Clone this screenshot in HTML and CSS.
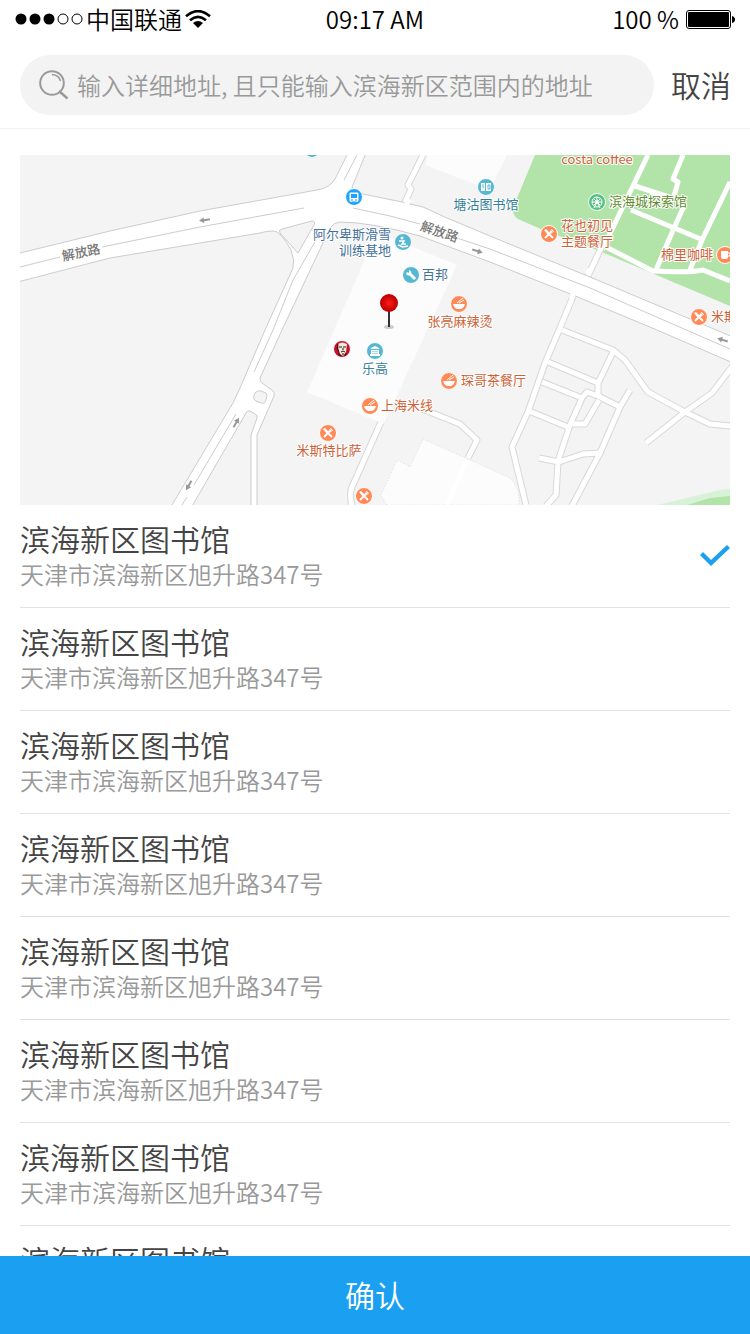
FILE: index.html
```
<!DOCTYPE html>
<html lang="zh-CN">
<head>
  <meta charset="UTF-8">
  <meta name="viewport" content="width=device-width, initial-scale=1.0">
  <title>选择地址</title>
  <link rel="stylesheet" href="styles.css">
</head>
<body>
  <div class="status-bar">
    <div class="carrier">
      <svg class="signal" width="68" height="12" viewBox="0 0 68 12">
        <circle cx="6" cy="6" r="5.5"/>
        <circle cx="20" cy="6" r="5.5"/>
        <circle cx="34" cy="6" r="5.5"/>
        <circle class="empty" cx="48" cy="6" r="5"/>
        <circle class="empty" cx="62" cy="6" r="5"/>
      </svg>
      <span>中国联通</span>
      <svg class="wifi" width="26" height="18" viewBox="0 0 26 18">
        <path d="M1 6.2Q13-4 25 6.2M5 10.3Q13 3.6 21 10.3" fill="none" stroke="#000" stroke-width="2.6"/>
        <path d="M8 13Q13 9 18 13L13 18Z"/>
      </svg>
    </div>
    <div class="time">09:17 AM</div>
    <div class="battery">
      <span>100 %</span>
      <svg width="49" height="19" viewBox="0 0 49 19">
        <rect x="0.5" y="0.5" width="44" height="18" rx="2.5" fill="none" stroke="#000"/>
        <rect x="2" y="2" width="41" height="15" rx="1"/>
        <path d="M46 6Q49 7 49 9.500T46 13Z"/>
      </svg>
    </div>
  </div>

  <form class="search-bar">
    <label class="search-box">
      <svg width="30" height="30" viewBox="0 0 30 30" fill="none" stroke="#999">
        <circle cx="13" cy="13" r="11.800" stroke-width="2"/>
        <path d="M20 21L28.500 28.500" stroke-width="2.400"/>
        <path d="M13 4.500Q20 5 21.500 11" stroke-width="1.500"/>
      </svg>
      <input type="search" aria-label="搜索地址" placeholder="输入详细地址, 且只能输入滨海新区范围内的地址">
    </label>
    <button type="button" class="cancel">取消</button>
  </form>

  <main>
    <svg class="map" viewBox="20 155 710 350" preserveAspectRatio="xMidYMid slice">
      <defs>
        <radialGradient id="ball">
          <stop offset="0" stop-color="#ff1a1a"/>
          <stop offset="1" stop-color="#b80000"/>
        </radialGradient>
        <symbol id="fork" viewBox="-10 -10 20 20">
          <circle class="ring food" r="8.500"/>
          <path d="M-1-1L4 4M2-2L-4 4" fill="none" stroke="#fff" stroke-width="1.800"/>
          <path d="M-5-4L-3-5L1-1L-1 1Z" fill="#fff"/>
          <path d="M1-2L3-5M2-1L5-3M1-1L4-4" fill="none" stroke="#fff"/>
        </symbol>
        <symbol id="bowl" viewBox="-10 -10 20 20">
          <circle class="ring food" r="8.500"/>
          <path d="M-6 0H6Q5 4 2 5H-2Q-5 4-6 0Z" fill="#fff"/>
          <path d="M-2-1L4-6M0-1L5-4" stroke="#fff"/>
        </symbol>
        <symbol id="arrow" viewBox="-7 -4 14 8">
          <path d="M-6 0L-1-3V-1H5V1H-1V3Z" fill="#999"/>
        </symbol>
        <!-- narrow streets, drawn twice: grey casing, then white fill -->
        <g id="streets" fill="none" stroke-linejoin="round">
          <path d="M423 155L408 185L411 189L403 207"/>
          <path d="M602 246L586 280M574 294L562 323L560 328L545 363L528 412L512 447L526 505"/>
          <path d="M562 330L613 350L625 360L648 392L685 412L710 424L730 426"/>
          <path d="M734 364L712 393L685 412L646 443"/>
          <path d="M548 362L598 383M613 352L598 383V396"/>
          <path d="M542 382L582 398L587 392L598 396L620 407M529 411L568 427"/>
          <path d="M582 398L570 425L560 455L558 462L556 495L546 506"/>
          <path d="M570 424H585L599 400M630 390L620 407L600 453L572 506"/>
          <path d="M539 458L559 462L583 454L601 453"/>
          <path d="M417 407L460 424L477 440L468 458M385 413L352 487Q349 494 352 506"/>
        </g>
      </defs>

      <rect x="20" y="155" width="710" height="350" fill="#f4f4f4"/>
      <path class="building" d="M428 155L425 165L477 185L493 183L507 155Z"/>

      <!-- parks -->
      <path fill="#b2e3a8" d="M535 155L515 203Q510 214 518 219L543 230L597 250L730 306V155Z"/>
      <path fill="#d8f2d8" d="M657 505L720 490L730 489V505Z"/>
      <path fill="#b2e3a8" d="M687 505L710 498L730 496V505Z"/>
      <g class="park-paths">
        <path d="M648 155L602 250"/>
        <path d="M683 155L673 179L678 182L674 196M684 206L674 228L656 270M730 182L702 240L690 270"/>
        <path d="M632 185L672 198M631 210L703 240M606 247L653 271Q690 273 703 270L730 281"/>
      </g>

      <use href="#streets" stroke="#d8d8d8" stroke-width="7"/>
      <use href="#streets" stroke="#fff" stroke-width="5"/>
      <path class="building" d="M377 232L457 265L384 424L307 392Z"/>
      <path class="building dotted" d="M387 505L381 495L397 460L410 467L423 439L490 469L510 478Q520 487 519 505Z"/>
      <path d="M467 460L447 505" stroke="#fff" stroke-width="5"/>

      <!-- main roads -->
      <path class="road" d="M10 256L20 253L110 231L200 211L317 190Q330 188 335 179L348 153H366L352 187Q356 193 363 194L402 202L423 207L447 218L490 236L590 277L740 340V366L657 330L573 295L490 262L420 236Q370 222 340 222Q334 222 330 228L282 330L260 378Q260 382 262 383L272 390Q275 392 274 396L257 435V515H251V435L257 418Q258 415 255 414L250 411Q247 410 246 413L187 515H166L233 403L240 388L265 330L293 268Q295 260 291 250Q280 230 273 231Q266 231 260 233L110 258L10 284Z"/>
      <path class="island" d="M282 229L312 221Q316 221 314 225L298 253L280 233Q278 230 282 229Z"/>
      <path class="island" d="M255 393Q257 390 261 391L266 393Q268 395 266 400Q265 404 261 403L256 401Q252 399 255 393Z"/>
      <path class="lane" d="M20 267L60 257M102 247L200 227L304 208M353 208L390 216L420 224M457 238L490 249L590 288L730 349M344 180L357 155M316 240L293 280L273 330L254 372M236 414L194 485M187 497L182 505"/>
      <path d="M409 199L406 205M574 292L571 299M587 274L590 269" stroke="#fff" stroke-width="5"/>
      <use href="#arrow" width="14" height="8" x="-7" y="-4" transform="translate(205 220) rotate(-8)"/>
      <use href="#arrow" width="14" height="8" x="-7" y="-4" transform="translate(477 251) rotate(198)"/>
      <use href="#arrow" width="14" height="8" x="-7" y="-4" transform="translate(236 423) rotate(120)"/>
      <use href="#arrow" width="14" height="8" x="-7" y="-4" transform="translate(189 485) rotate(-60)"/>
      <use href="#arrow" width="14" height="8" x="-7" y="-4" transform="translate(723 340) rotate(18)"/>

      <text class="street-name" transform="translate(82 257) rotate(-12)">解放路</text>
      <text class="street-name" transform="translate(438 236) rotate(19)">解放路</text>

      <!-- points of interest -->
      <circle class="ring sight" cx="312" cy="149" r="8.500"/>
      <g transform="translate(354 197)">
        <circle class="ring bus" r="8.500"/>
        <path d="M-4-4H4V4H-4ZM-3 4V5M3 4V5" fill="#fff" stroke="#fff"/>
        <rect class="bus" x="-3" y="-3" width="6" height="4"/>
        <path d="M-3 3H-1M1 3H3" stroke="#20a5ff"/>
      </g>
      <g transform="translate(403 242)">
        <circle class="ring sight" r="8.500"/>
        <circle cx="-1" cy="-4" r="1.500" fill="#fff"/>
        <path d="M-4-1L1-1L-1 2L3 2M-5 3L0 5L5 4" fill="none" stroke="#fff" stroke-width="1.500"/>
      </g>
      <text class="label shop end" x="391" y="239">阿尔卑斯滑雪</text>
      <text class="label shop end" x="391" y="255">训练基地</text>
      <g transform="translate(411 275)">
        <circle class="ring sight" r="8.500"/>
        <path d="M-2-2L4 4" stroke="#fff" stroke-width="3"/>
        <path d="M-2-5Q1-4 0-1Q-2 2-5-1L-4-3L-2-2Z" fill="#fff"/>
      </g>
      <text class="label shop" x="422" y="279">百邦</text>
      <g transform="translate(486 187)">
        <circle class="ring sight" r="8.500"/>
        <path d="M-5-4H-1V4H-5ZM0-4H5V4H0Z" fill="#fff"/>
        <path d="M-4-2H-2M-4 0H-2M2-2H4V2H2Z" fill="none" stroke="#55b8d3"/>
      </g>
      <text class="label culture middle" x="486" y="209">塘沽图书馆</text>
      <g transform="translate(375 351)">
        <circle class="ring sight" r="8.500"/>
        <path d="M-5-2Q-3-4 0-5Q3-4 5-2ZM-4-1H4V3H-4ZM-5 3H5V5H-5Z" fill="#fff"/>
        <path d="M-3 0.500H3M-3 2.500H3" stroke="#55b8d3" stroke-width="0.500"/>
      </g>
      <text class="label culture middle" x="375" y="373">乐高</text>
      <g transform="translate(342 349)">
        <circle class="ring kfc" r="8.500"/>
        <path d="M-4-5Q0-8 5-5L4 3L1 7L-3 4Z" fill="#f4ead8"/>
        <path d="M-4-5Q-6 0-3 3L-3 6M-3-2H0M1-2H4M1-1V1M-1 3L1 2L3 3M1 4V6M-3 6L-1 7M4 4L3 7" fill="none" stroke="#221a18"/>
      </g>
      <g transform="translate(597 202)">
        <circle class="ring garden" r="8.500"/>
        <circle r="5" fill="none" stroke="#fff"/>
        <path d="M-3-3L3 3M3-3L-3 3M0-5V0M0 0L-3 6M0 0L3 6M-5 0H5" stroke="#fff"/>
        <circle r="1.800" fill="#fff"/>
      </g>
      <text class="label green" x="609" y="206">滨海城探索馆</text>

      <text class="label eat middle" x="597" y="164">costa coffee</text>
      <use href="#fork" x="539" y="224" width="20" height="20"/>
      <text class="label eat" x="561" y="230">花也初见</text>
      <text class="label eat" x="561" y="246">主题餐厅</text>
      <g transform="translate(725 255)">
        <circle class="ring food" r="8.500"/>
        <path d="M-4-4H3V2Q3 4 1 4H-2Q-4 4-4 2Z" fill="#fff"/>
        <path d="M3-2H5V1H3" fill="none" stroke="#fff"/>
      </g>
      <text class="label eat end" x="713" y="259">棉里咖啡</text>
      <use href="#fork" x="689" y="307" width="20" height="20"/>
      <text class="label eat" x="711" y="321">米斯特</text>
      <use href="#bowl" x="449" y="294" width="20" height="20"/>
      <text class="label eat middle" x="460" y="326">张亮麻辣烫</text>
      <use href="#bowl" x="439" y="371" width="20" height="20"/>
      <text class="label eat" x="461" y="385">琛哥茶餐厅</text>
      <use href="#bowl" x="360" y="396" width="20" height="20"/>
      <text class="label eat" x="381" y="410">上海米线</text>
      <use href="#fork" x="318" y="423" width="20" height="20"/>
      <text class="label eat middle" x="329" y="455">米斯特比萨</text>
      <use href="#fork" x="354" y="486" width="20" height="20"/>

      <!-- current position -->
      <ellipse cx="389" cy="327" rx="5" ry="2" fill="#ccc"/>
      <path d="M389 310V327" stroke="#333" stroke-width="2"/>
      <circle cx="389" cy="303" r="9" fill="url(#ball)"/>
    </svg>

    <ul class="places">
      <li><label class="place">
        <span class="name">滨海新区图书馆</span>
        <span class="address">天津市滨海新区旭升路347号</span>
        <input type="radio" name="place" checked>
      </label></li>
      <li><label class="place">
        <span class="name">滨海新区图书馆</span>
        <span class="address">天津市滨海新区旭升路347号</span>
        <input type="radio" name="place">
      </label></li>
      <li><label class="place">
        <span class="name">滨海新区图书馆</span>
        <span class="address">天津市滨海新区旭升路347号</span>
        <input type="radio" name="place">
      </label></li>
      <li><label class="place">
        <span class="name">滨海新区图书馆</span>
        <span class="address">天津市滨海新区旭升路347号</span>
        <input type="radio" name="place">
      </label></li>
      <li><label class="place">
        <span class="name">滨海新区图书馆</span>
        <span class="address">天津市滨海新区旭升路347号</span>
        <input type="radio" name="place">
      </label></li>
      <li><label class="place">
        <span class="name">滨海新区图书馆</span>
        <span class="address">天津市滨海新区旭升路347号</span>
        <input type="radio" name="place">
      </label></li>
      <li><label class="place">
        <span class="name">滨海新区图书馆</span>
        <span class="address">天津市滨海新区旭升路347号</span>
        <input type="radio" name="place">
      </label></li>
      <li><label class="place">
        <span class="name">滨海新区图书馆</span>
        <span class="address">天津市滨海新区旭升路347号</span>
        <input type="radio" name="place">
      </label></li>
    </ul>
  </main>

  <button type="button" class="confirm">确认</button>
</body>
</html>
```
FILE: styles.css
```
* {
  box-sizing: border-box;
}

body {
  display: flex;
  flex-direction: column;
  height: 100vh;
  margin: 0;
  background: #fff;
  color: #444;
  font-family: "Noto Sans CJK SC", sans-serif;
  font-size: 24px;
  font-weight: 350;
}

button,
input {
  margin: 0;
  padding: 0;
  border: none;
  background: none;
  font: inherit;
}

svg {
  flex: none;
}

/* status bar */
.status-bar {
  display: grid;
  grid-template-columns: 1fr auto 1fr;
  align-items: center;
  height: 40px;
  padding: 0 15px 2px;
  color: #000;
  line-height: 38px;
}

.carrier,
.battery {
  display: flex;
  align-items: center;
}

.carrier {
  gap: 3px;
}

.signal .empty {
  fill: none;
  stroke: #000;
}

.battery {
  justify-content: flex-end;
  gap: 7px;
}

/* search */
.search-bar {
  display: flex;
  gap: 17px;
  padding: 15px 19px 13px 20px;
  border-bottom: 1px solid #f2f2f2;
}

.search-box {
  display: flex;
  flex: 1;
  align-items: center;
  gap: 8px;
  min-width: 0;
  height: 60px;
  padding: 0 19px;
  border-radius: 30px;
  background: #f3f3f3;
}

.search-box input {
  flex: 1;
  min-width: 0;
  height: 36px;
  padding-bottom: 2px;
  outline: none;
  appearance: none;
}

.search-box input::placeholder {
  color: #999;
  opacity: 1;
}

.cancel {
  padding-bottom: 3px;
  color: #444;
  font-size: 30px;
}

/* map */
main {
  flex: 1;
  min-height: 0;
  padding: 26px 20px 0;
  overflow-y: auto;
  scrollbar-width: none;
}

.map {
  display: block;
  width: 100%;
  height: 350px;
}

.building {
  fill: #fcfcfc;
}

.dotted {
  stroke: #ddd;
  stroke-dasharray: 1 2;
}

.park-paths {
  fill: none;
  stroke: #fff;
  stroke-width: 5;
  stroke-linejoin: round;
}

.road {
  fill: #fff;
  stroke: #ccc;
}

.island {
  fill: #f4f4f4;
  stroke: #ccc;
}

.lane {
  fill: none;
  stroke: #ccc;
}

.ring {
  stroke: #fff;
}

.food {
  fill: #ff8a57;
}

.sight {
  fill: #55b8d3;
}

.bus {
  fill: #20a5ff;
}

.garden {
  fill: #55c184;
}

.kfc {
  fill: #c8102e;
}

.label,
.street-name {
  font-size: 13px;
  font-weight: 400;
  paint-order: stroke;
  stroke: #fff;
  stroke-width: 2px;
  stroke-linejoin: round;
}

.street-name {
  fill: #777;
  font-weight: 500;
  text-anchor: middle;
}

.middle {
  text-anchor: middle;
}

.end {
  text-anchor: end;
}

.eat {
  fill: #cc6238;
}

.shop {
  fill: #44719a;
}

.culture {
  fill: #33809a;
}

.green {
  fill: #5e8c2c;
}

/* address list */
.places {
  margin: 0;
  padding: 0;
  list-style: none;
}

.place {
  display: grid;
  grid-template-columns: 1fr 30px;
  align-items: center;
  padding: 15px 0;
  border-bottom: 1px solid #e2e2e2;
}

.name {
  font-size: 30px;
  line-height: 36px;
}

.address {
  grid-row: 2;
  color: #999;
  line-height: 36px;
}

.place input {
  grid-area: 1 / 2 / 3 / 3;
  width: 30px;
  height: 22px;
  appearance: none;
}

.place input:checked {
  background: #1b9ff1;
  clip-path: polygon(0 10px, 3px 7px, 11px 15px, 27px 0, 30px 3px, 11px 21px);
}

/* footer */
.confirm {
  flex: none;
  height: 78px;
  padding-bottom: 3px;
  background: #1b9ff1;
  color: #fff;
  font-size: 30px;
}
```
